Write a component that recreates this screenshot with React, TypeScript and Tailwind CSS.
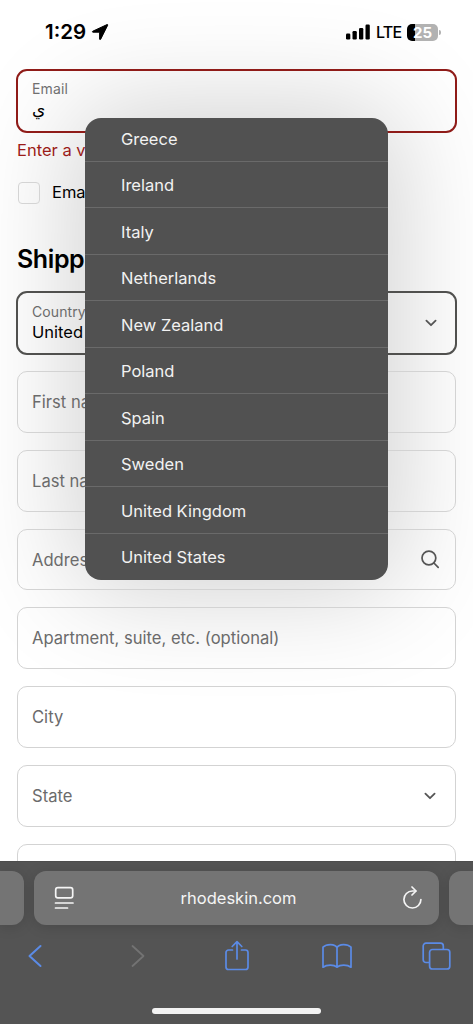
import type { ReactNode } from 'react';

const countries = [
  'Greece',
  'Ireland',
  'Italy',
  'Netherlands',
  'New Zealand',
  'Poland',
  'Spain',
  'Sweden',
  'United Kingdom',
  'United States',
];

function Chevron() {
  return (
    <svg width="12" height="8" viewBox="0 0 12 8" fill="none" stroke="#555" strokeWidth="1.8" strokeLinecap="round" strokeLinejoin="round">
      <path d="M1.4 1.6 6 6.2l4.6-4.6" />
    </svg>
  );
}

function SearchIcon() {
  return (
    <svg className="shrink-0" width="20" height="20" viewBox="0 0 20 20" fill="none" stroke="#555" strokeWidth="1.7" strokeLinecap="round">
      <circle cx="8.9" cy="9" r="6.9" />
      <path d="m13.9 14 4.300 4.300" />
    </svg>
  );
}

function StatusBar() {
  return (
    <header className="flex h-[69px] items-start pt-[20px] pr-[32px] pl-[45px]">
      <div className="flex h-6 items-center">
        <span className="w-[42px] text-[20.5px] font-semibold leading-6 tracking-[0px] whitespace-nowrap">1:29</span>
        <svg className="ml-[4px]" width="18" height="18" viewBox="0 0 18 18">
          <path d="M16 1.600 1.800 8.200c-.6.3-.5 1 .2 1h6.600v6.800c0 .7.800.8 1.100.2L16.700 2.200c.2-.5-.2-.8-.7-.6Z" fill="#000" stroke="#000" strokeWidth="1" strokeLinejoin="round" />
        </svg>
      </div>
      <div className="ml-auto flex h-6 items-center">
        <svg width="24" height="16" viewBox="0 0 24 16" fill="#000">
          <rect x="0" y="9.5" width="4.3" height="6" rx="1.2" />
          <rect x="6.5" y="7" width="4.3" height="8.5" rx="1.2" />
          <rect x="13" y="4" width="4.3" height="11.5" rx="1.2" />
          <rect x="19.5" y="0.5" width="4.3" height="15" rx="1.2" />
        </svg>
        <span className="ml-[6px] w-[26px] text-[16px] font-medium leading-6 tracking-[-0.7px]">LTE</span>
        <div className="ml-[5px] flex h-[17px] w-[31px] items-center justify-center rounded-[5px] bg-[linear-gradient(90deg,#000_8px,#b2b2b2_8px)] text-[15px] font-bold leading-none text-white">
          25
        </div>
        <div className="ml-[1px] h-[5px] w-[2px] rounded-r-full bg-[#b2b2b2]" />
      </div>
    </header>
  );
}

function Field({ label, icon }: { label?: string; icon?: ReactNode }) {
  return (
    <div className="flex h-[61.8px] shrink-0 items-center justify-between rounded-[10px] border border-[#d3d3d3] pr-[18px] pl-[14px] text-[16.6px] text-[#6b6b6b]">
      <span className="pt-px whitespace-nowrap">{label}</span>
      {icon && <span className="flex w-[14px] justify-center">{icon}</span>}
    </div>
  );
}

function CountryMenu() {
  return (
    <ul className="absolute top-[118px] left-[85px] flex h-[462px] w-[303px] flex-col overflow-hidden rounded-[16px] bg-[#515151] text-[16.5px] text-[#f2f2f2]">
      {countries.map((name) => (
        <li
          key={name}
          className="flex h-[46.5px] shrink-0 items-center border-b border-[#6a6a6a] pt-[3px] pl-[36px] first:h-[43.5px] first:pt-0 last:border-b-0 last:pt-[2px]"
        >
          {name}
        </li>
      ))}
    </ul>
  );
}

function BrowserBar() {
  return (
    <footer className="absolute inset-x-0 bottom-0 flex h-[163px] flex-col overflow-hidden border-t border-[#4d4d4d] bg-[#545454] pt-[9px]">
      <div className="flex h-[54px] gap-[10px]">
        <div className="w-[24px] shrink-0 rounded-r-[12px] bg-[#747474] shadow-[0_2px_14px_rgba(0,0,0,0.14)]" />
        <div className="flex w-[405px] shrink-0 items-center justify-between rounded-[12px] bg-[#747474] pr-[16px] pl-[20px] shadow-[0_2px_14px_rgba(0,0,0,0.14)]">
          <svg width="21" height="24" viewBox="0 0 21 24" fill="none" stroke="#f5f5f5" strokeWidth="1.7" strokeLinecap="round">
            <rect x="1.7" y="1.7" width="17" height="10.2" rx="2.2" />
            <path d="M1.5 17h17.5M1.5 22h12" />
          </svg>
          <span className="text-[16.5px] text-[#f5f5f5]">rhodeskin.com</span>
          <svg width="21" height="24" viewBox="0 0 21 24" fill="none" stroke="#f5f5f5" strokeWidth="1.7" strokeLinecap="round" strokeLinejoin="round">
            <path d="M18.9 13.5a8.5 8.5 0 1 1-8.500-8.500h3.300" />
            <path d="m10 1 4 4-4 4" />
          </svg>
        </div>
        <div className="w-[24px] shrink-0 rounded-l-[12px] bg-[#747474] shadow-[0_2px_14px_rgba(0,0,0,0.14)]" />
      </div>
      <nav className="flex h-[61px] items-center pl-[28px]">
        <svg width="15" height="24" viewBox="0 0 15 24" fill="none" stroke="#5b8be6" strokeWidth="2" strokeLinecap="round" strokeLinejoin="round">
          <path d="M12.5 2 1.5 12l11 10" />
        </svg>
        <svg className="ml-[87px]" width="15" height="24" viewBox="0 0 15 24" fill="none" stroke="#737373" strokeWidth="1.8" strokeLinecap="round" strokeLinejoin="round">
          <path d="M2.5 2l11 10-11 10" />
        </svg>
        <svg className="ml-[79px]" width="26" height="32" viewBox="0 0 26 32" fill="none" stroke="#5b8be6" strokeWidth="1.7" strokeLinecap="round" strokeLinejoin="round">
          <path d="M8.5 10H4.5a2.5 2.5 0 0 0-2.500 2.500v14.500A2.5 2.5 0 0 0 4.5 29.5h17a2.5 2.5 0 0 0 2.500-2.500v-14.500a2.5 2.5 0 0 0-2.500-2.500h-4" />
          <path d="M13 19V2M8.200 6.500l4.800-4.800 4.800 4.800" />
        </svg>
        <svg className="ml-[72px]" width="30" height="26" viewBox="0 0 30 26" fill="none" stroke="#5b8be6" strokeWidth="1.7" strokeLinecap="round" strokeLinejoin="round">
          <path d="M15 4.500C13 .6 4.500.6 1 4.200v20c3.800-2.800 11-2.800 14 0 3-2.800 10.200-2.800 14 0v-20C25.500.6 17 .6 15 4.500Zm0 0v19.700" />
        </svg>
        <svg className="ml-[70px]" width="29" height="28" viewBox="0 0 29 28" fill="none" stroke="#5b8be6" strokeWidth="1.7" strokeLinejoin="round">
          <path d="M7.500 20.500H4A2.800 2.800 0 0 1 1.200 17.700V4A2.800 2.800 0 0 1 4 1.200h14.500A2.800 2.800 0 0 1 21.300 4v3.300" />
          <rect x="7.6" y="7.5" width="20.2" height="19.5" rx="2.8" />
        </svg>
      </nav>
      <div className="mx-auto mt-[22px] h-[6px] w-[169px] shrink-0 rounded-full bg-[#f3f3f3]" />
    </footer>
  );
}

export default function App() {
  return (
    <div className="relative h-[1024px] w-[473px] overflow-hidden bg-white font-[Inter,'Noto_Sans',sans-serif] text-black">
      <div className="absolute top-[118px] left-[85px] h-[462px] w-[303px] rounded-[16px] shadow-[0_0_110px_10px_rgba(0,0,0,0.19)]" />
      <div className="relative flex h-full flex-col">
        <StatusBar />
        <main className="flex flex-col px-[16px]">
          <div className="flex h-[64px] flex-col rounded-[11px] border-2 border-[#8f1b18] pt-[8px] pl-[14px]">
            <label className="text-[14px] leading-[20px] tracking-[0.15px] text-[#707070]">Email</label>
            <span className="font-['DejaVu_Sans',sans-serif] text-[17px] leading-[20px]">ي</span>
          </div>
          <p className="mt-[6px] ml-[1px] text-[16.5px] leading-[22px] whitespace-nowrap text-[#9b1c19]">Enter a v</p>
          <div className="mt-[20px] ml-[2px] flex h-[23px] items-center">
            <span className="h-[22px] w-[22px] rounded-[4px] border border-[#d4d4d4]" />
            <span className="ml-[12px] text-[16.5px] whitespace-nowrap">Ema</span>
          </div>
          <h2 className="mt-[40px] ml-[1px] text-[25px] font-semibold leading-[30px] tracking-[-0.4px]">Shipp</h2>
          <div className="mt-[17px] flex h-[64px] items-center justify-between rounded-[11px] border-2 border-[#50504e] pr-[18px] pl-[14px]">
            <div className="flex flex-col pb-[2px] whitespace-nowrap">
              <span className="text-[14px] leading-[20px] tracking-[0.1px] text-[#6b6b6b]">Country</span>
              <span className="text-[16.5px] leading-[21px]">United</span>
            </div>
            <Chevron />
          </div>
          <div className="mt-[16px] flex flex-col gap-[17px] px-[1px]">
            <Field label="First na" />
            <Field label="Last na" />
            <Field label="Addres" icon={<SearchIcon />} />
            <Field label="Apartment, suite, etc. (optional)" />
            <Field label="City" />
            <Field label="State" icon={<Chevron />} />
            <Field />
          </div>
        </main>
      </div>
      <CountryMenu />
      <BrowserBar />
    </div>
  );
}
